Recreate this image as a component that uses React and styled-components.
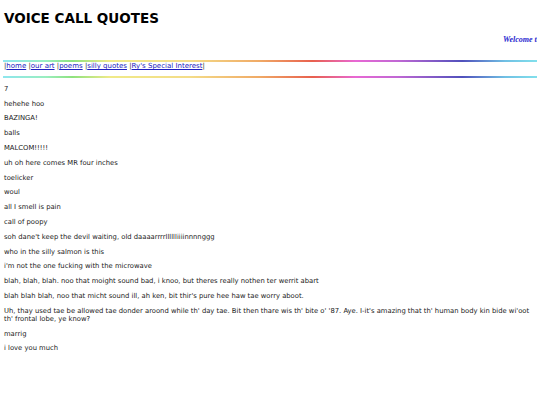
import React from "react";
import styled, { createGlobalStyle } from "styled-components";

const Global = createGlobalStyle`
  html, body { background: #ffffff; }
  body {
    margin: 0;
    padding: 4px 3px 4px 4px;
    font-family: "DejaVu Sans", Verdana, sans-serif;
    color: #111;
  }
`;

const Title = styled.h1`
  margin: 6px 0 0 0;
  font-family: "DejaVu Sans", Verdana, sans-serif;
  font-size: 13.5px;
  font-weight: bold;
  line-height: 16px;
  color: #000;
`;

const Marquee = styled.div`
  margin-top: 9px;
  overflow: hidden;
  white-space: nowrap;
  font-family: "Liberation Serif", "Times New Roman", serif;
  font-style: italic;
  font-weight: bold;
  font-size: 8px;
  line-height: 10px;
  color: #2a2ad0;
`;

const MarqueeText = styled.span`
  display: inline-block;
`;

const Spacer = styled.div`
  height: ${(p) => p.$h}px;
`;

/* thin rainbow divider */
const Rule = styled.div`
  height: 2px;
  margin-left: -1px;
  background: linear-gradient(
    to right,
    #8ee6ee 0%,
    #9aeec0 8%,
    #8ee27e 13%,
    #f0ea88 20%,
    #f4dc88 35%,
    #f0aa66 48%,
    #e8604e 58%,
    #e868d4 66%,
    #c068d4 74%,
    #5050bc 86%,
    #70c0e4 94%,
    #82e0ec 100%
  );
`;

const NavBar = styled.nav`
  padding: 0 0 6px 0;
  font-size: 7px;
  line-height: 8px;
  color: #333;
  white-space: nowrap;
`;

const NavLink = styled.a`
  color: #2020c0;
  text-decoration: underline;
`;

const Quotes = styled.div`
  padding-top: 0;
`;

const Quote = styled.p`
  margin: 6.8px 0;
  font-size: 6.8px;
  line-height: 8px;
  color: #1a1a1a;
`;

const links = ["home", "our art", "poems", "silly quotes", "Ry's Special Interest"];

const quotes = [
  "7",
  "hehehe hoo",
  "BAZINGA!",
  "balls",
  "MALCOM!!!!!",
  "uh oh here comes MR four inches",
  "toelicker",
  "woul",
  "all I smell is pain",
  "call of poopy",
  "soh dane't keep the devil waiting, old daaaarrrrlllllliiiinnnnggg",
  "who in the silly salmon is this",
  "i'm not the one fucking with the microwave",
  "blah, blah, blah. noo that moight sound bad, i knoo, but theres really nothen ter werrit abart",
  "blah blah blah, noo that micht sound ill, ah ken, bit thir's pure hee haw tae worry aboot.",
  "Uh, thay used tae be allowed tae donder aroond while th' day tae. Bit then thare wis th' bite o' '87. Aye. I-it's amazing that th' human body kin bide wi'oot th' frontal lobe, ye know?",
  "marrig",
  "i love you much",
];

export default function App() {
  // scroll position of the welcome banner when the page was drawn
  const bannerOffset = 499;
  return (
    <>
      <Global />
      <Title>VOICE CALL QUOTES</Title>
      <Marquee>
        <MarqueeText style={{ marginLeft: bannerOffset }}>
          Welcome to the voice call quotes page
        </MarqueeText>
      </Marquee>
      <Spacer $h={15} />
      <Rule />
      <NavBar>
        {links.map((l, i) => (
          <React.Fragment key={l}>
            |<NavLink href="#">{l}</NavLink>
            {i < links.length - 1 ? " " : "|"}
          </React.Fragment>
        ))}
      </NavBar>
      <Rule />
      <Quotes>
        {quotes.map((q, i) => (
          <Quote key={i}>{q}</Quote>
        ))}
      </Quotes>
    </>
  );
}
